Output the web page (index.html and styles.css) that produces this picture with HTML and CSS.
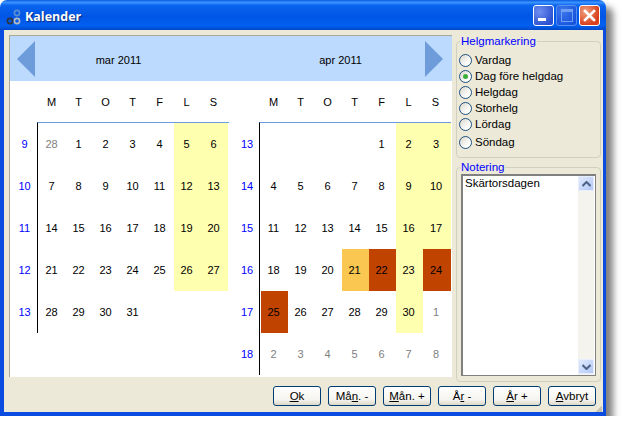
FILE: index.html
```html
<!DOCTYPE html>
<html lang="sv">
  <head>
    <meta charset="UTF-8" />
    <title>Kalender</title>
    <link rel="stylesheet" href="styles.css">
  </head>
  <body>
    <div class="window">
      <div class="titlebar">
        <svg class="app-icon" width="16" height="18" viewBox="0 0 16 18">
          <circle cx="11" cy="5" r="2.6" fill="none" stroke="#5b8fd0" stroke-width="1.6" />
          <circle cx="4" cy="13" r="2.6" fill="none" stroke="#30343c" stroke-width="1.6" />
          <circle cx="11" cy="13" r="2.6" fill="none" stroke="#b8bcc0" stroke-width="1.6" />
        </svg>
        <span class="title">Kalender</span>
        <div class="title-buttons">
          <div class="tbtn tbtn-min"><span class="min-bar"></span></div>
          <div class="tbtn tbtn-max"><span class="max-box"></span></div>
          <div class="tbtn tbtn-close">
            <svg width="13" height="13" viewBox="0 0 13 13">
              <path d="M2 2 L11 11 M11 2 L2 11" stroke="#fff" stroke-width="2.6" stroke-linecap="square" />
            </svg>
          </div>
        </div>
      </div>

      <div class="client">
        <div class="main">
          <div class="calendar">
            <div class="cal-head">
              <div class="arrow arrow-prev"></div>
              <div class="month-label label-mar">mar 2011</div>
              <div class="month-label label-apr">apr 2011</div>
              <div class="arrow arrow-next"></div>
            </div>
            <div class="months">
              <div class="month month-mar">
                <div class="dow">
                  <span>M</span><span>T</span><span>O</span><span>T</span><span>F</span><span>L</span><span>S</span>
                </div>
                <div class="month-body">
                  <div class="weeks">
                    <span>9</span><span>10</span><span>11</span><span>12</span><span>13</span>
                  </div>
                  <div class="days">
                    <span class="other">28</span><span>1</span><span>2</span><span>3</span><span>4</span><span class="we">5</span><span class="we">6</span>
                    <span>7</span><span>8</span><span>9</span><span>10</span><span>11</span><span class="we">12</span><span class="we">13</span>
                    <span>14</span><span>15</span><span>16</span><span>17</span><span>18</span><span class="we">19</span><span class="we">20</span>
                    <span>21</span><span>22</span><span>23</span><span>24</span><span>25</span><span class="we">26</span><span class="we">27</span>
                    <span>28</span><span>29</span><span>30</span><span>31</span>
                  </div>
                </div>
              </div>
              <div class="month month-apr">
                <div class="dow">
                  <span>M</span><span>T</span><span>O</span><span>T</span><span>F</span><span>L</span><span>S</span>
                </div>
                <div class="month-body">
                  <div class="weeks">
                    <span>13</span><span>14</span><span>15</span><span>16</span><span>17</span><span>18</span>
                  </div>
                  <div class="days">
                    <span></span><span></span><span></span><span></span><span>1</span><span class="we">2</span><span class="we">3</span>
                    <span>4</span><span>5</span><span>6</span><span>7</span><span>8</span><span class="we">9</span><span class="we">10</span>
                    <span>11</span><span>12</span><span>13</span><span>14</span><span>15</span><span class="we">16</span><span class="we">17</span>
                    <span>18</span><span>19</span><span>20</span><span class="eve">21</span><span class="hol">22</span><span class="we">23</span><span class="hol">24</span>
                    <span class="hol">25</span><span>26</span><span>27</span><span>28</span><span>29</span><span class="we">30</span><span class="other">1</span>
                    <span class="other">2</span><span class="other">3</span><span class="other">4</span><span class="other">5</span><span class="other">6</span><span class="other">7</span><span class="other">8</span>
                  </div>
                </div>
              </div>
            </div>
          </div>

          <div class="side">
            <fieldset class="group group-mark">
              <legend>Helgmarkering</legend>
              <div class="radio"><i class="dot"></i>Vardag</div>
              <div class="radio"><i class="dot on"></i>Dag före helgdag</div>
              <div class="radio"><i class="dot"></i>Helgdag</div>
              <div class="radio"><i class="dot"></i>Storhelg</div>
              <div class="radio"><i class="dot"></i>Lördag</div>
              <div class="radio radio-last"><i class="dot"></i>Söndag</div>
            </fieldset>
            <fieldset class="group group-note">
              <legend>Notering</legend>
              <div class="notebox">
                <div class="notetext">Skärtorsdagen</div>
                <div class="scrollbar">
                  <div class="sbtn">
                    <svg width="9" height="6" viewBox="0 0 9 6"><path d="M0.5 5 L4.5 1 L8.5 5" fill="none" stroke="#4d6185" stroke-width="2" /></svg>
                  </div>
                  <div class="sbtn">
                    <svg width="9" height="6" viewBox="0 0 9 6"><path d="M0.5 1 L4.5 5 L8.5 1" fill="none" stroke="#4d6185" stroke-width="2" /></svg>
                  </div>
                </div>
              </div>
            </fieldset>
          </div>
        </div>

        <div class="buttons">
          <button><u>O</u>k</button>
          <button>Må<u>n</u>. -</button>
          <button><u>M</u>ån. +</button>
          <button>Å<u>r</u> -</button>
          <button><u>Å</u>r +</button>
          <button><u>A</u>vbryt</button>
        </div>
        <div class="grip"></div>
      </div>
    </div>
  </body>
</html>
```

FILE: styles.css
```css
body {
  margin: 0;
  background-color: #fff;
  font-family: "Liberation Sans", Arial, sans-serif;
  font-size: 11px;
  color: #000;
}

.window {
  width: 606px;
  height: 416px;
  display: flex;
  flex-direction: column;
  border-radius: 7px 7px 0 0;
  box-shadow: 7px 7px 7px rgba(0, 0, 0, 0.5);
}

/* title bar */
.titlebar {
  height: 30px;
  flex: none;
  display: flex;
  align-items: center;
  padding: 2px 6px 0;
  box-sizing: border-box;
  border-radius: 7px 7px 0 0;
  background: linear-gradient(180deg, #0a5be0 0%, #3a93ff 8%, #0a64ee 18%, #0055e5 55%, #0260f0 85%, #0048c8 100%);
}

.app-icon {
  margin-top: 1px;
}

.title {
  margin-left: 3px;
  font-family: "Open Sans", Arial, sans-serif;
  font-size: 12.5px;
  font-weight: 700;
  color: #fff;
  text-shadow: 1px 1px 1px #0a2a80;
}

.title-buttons {
  margin-left: auto;
  margin-top: -2px;
  display: flex;
  gap: 2px;
}

.tbtn {
  width: 19px;
  height: 19px;
  border: 1px solid #fff;
  border-radius: 3px;
  display: flex;
  align-items: center;
  justify-content: center;
  background: radial-gradient(circle at 30% 30%, #6d8ff0, #2a4fd0 80%);
}

.tbtn-max {
  opacity: 0.55;
  border-color: #9bb8f5;
}

.tbtn-close {
  background: radial-gradient(circle at 30% 30%, #f0a080, #d8401c 70%);
}

.min-bar {
  width: 8px;
  height: 3px;
  background: #fff;
  margin-top: 8px;
  margin-right: 3px;
}

.max-box {
  width: 10px;
  height: 9px;
  border: 1px solid #c8d8ff;
  border-top-width: 3px;
}

/* client area */
.client {
  flex: 1;
  position: relative;
  background-color: #ece9d8;
  border: solid #0a4be0;
  border-width: 0 3px 4px 4px;
  padding: 5px 0 0 5px;
  min-height: 0;
}

.main {
  display: flex;
  align-items: flex-start;
}

.calendar {
  width: 442px;
  height: 341px;
  border-left: 1px solid #aca899;
  border-top: 1px solid #aca899;
  background-color: #fff;
  flex: none;
}

.cal-head {
  position: relative;
  height: 45px;
  display: flex;
  align-items: center;
  background-color: #bcd9fe;
}

.month-label {
  padding-top: 3px;
  text-align: center;
}

.label-mar {
  width: 217px;
}

.label-apr {
  width: 225px;
  padding-left: 2px;
  box-sizing: border-box;
}

.arrow {
  position: absolute;
  top: 5px;
  width: 0;
  height: 0;
  border-top: 18px solid transparent;
  border-bottom: 18px solid transparent;
}

.arrow-prev {
  left: 7px;
  border-right: 18px solid #6e9bd9;
}

.arrow-next {
  right: 9px;
  border-left: 18px solid #6e9bd9;
}

.months {
  display: flex;
}

.month-mar {
  width: 219px;
}

.month-apr {
  width: 222px;
}

.dow {
  height: 41px;
  display: grid;
  grid-template-columns: repeat(7, 27px);
  align-items: center;
  text-align: center;
}

.month-mar .dow {
  padding-left: 28px;
}

.month-apr .dow {
  padding-left: 31px;
}

.month-body {
  display: flex;
}

.weeks {
  flex: none;
  display: grid;
  grid-auto-rows: 42px;
  padding-top: 1px;
  align-items: center;
  text-align: center;
  color: #0000ff;
  box-sizing: border-box;
}

.month-mar .weeks {
  width: 27px;
  padding-left: 2px;
}

.month-apr .weeks {
  width: 30px;
  padding-left: 6px;
}

.days {
  display: grid;
  grid-template-columns: repeat(7, 27px);
  grid-auto-rows: 42px;
  padding: 0 1px 0 1px;
  border-left: 1px solid #000;
  border-top: 1px solid #6a9be0;
}

.days span {
  display: flex;
  align-items: center;
  justify-content: center;
  padding-right: 2px;
}

.month-apr .days span:nth-child(7n) {
  width: 28px;
  box-sizing: border-box;
}

.other {
  color: #808080;
}

.we {
  background-color: #ffffb0;
}

.eve {
  background-color: #fac850;
}

.hol {
  background-color: #c04400;
}

/* right side */
.side {
  margin-left: 4px;
  width: 145px;
  flex: none;
  display: flex;
  flex-direction: column;
  gap: 3px;
  font-size: 11.5px;
}

.group {
  margin: 0;
  padding: 0 4px;
  border: 1px solid #d0d0bf;
  border-radius: 4px;
  box-sizing: border-box;
}

.group legend {
  margin-left: -1px;
  padding: 0 1px;
  color: #0000ff;
  font-size: 11.5px;
  line-height: 13px;
}

.group-mark {
  height: 123px;
}

.group-note {
  height: 221px;
}

.radio {
  height: 16px;
  display: flex;
  align-items: center;
  gap: 3px;
  margin-left: -2px;
}

.radio:first-of-type {
  margin-top: 4px;
}

.radio-last {
  margin-top: 2px;
}

.dot {
  width: 11px;
  height: 11px;
  flex: none;
  border: 1px solid #1c5180;
  border-radius: 50%;
  background: linear-gradient(135deg, #dcd8cc, #fff 75%);
  position: relative;
}

.dot.on::after {
  content: "";
  position: absolute;
  left: 3px;
  top: 3px;
  width: 5px;
  height: 5px;
  border-radius: 50%;
  background: #3cae3c;
}

.notebox {
  height: 202px;
  display: flex;
  background-color: #fff;
  border: 1px solid #808080;
  border-top-width: 2px;
  border-left-width: 2px;
  box-sizing: border-box;
  padding-right: 1px;
}

.notetext {
  flex: 1;
  padding: 1px 2px;
}

.scrollbar {
  width: 16px;
  display: flex;
  flex-direction: column;
  justify-content: space-between;
  background-color: #f4f3ee;
  padding: 0 0 1px;
}

.sbtn {
  height: 15px;
  display: flex;
  align-items: center;
  justify-content: center;
  background: linear-gradient(135deg, #e1eafe, #b3c8f6);
  border: 1px solid #e8eefc;
  box-sizing: border-box;
}

/* bottom buttons */
.buttons {
  position: absolute;
  right: 7px;
  top: 356px;
  display: flex;
  gap: 7px;
}

button {
  width: 48px;
  height: 20px;
  padding: 0;
  font: inherit;
  font-size: 11.5px;
  color: #000;
  border: 1px solid #003c74;
  border-radius: 3px;
  background: linear-gradient(180deg, #fff 0%, #f5f4ee 70%, #dcd8c8 100%);
}

.grip {
  position: absolute;
  right: 1px;
  bottom: 0;
  width: 6px;
  height: 6px;
  background: linear-gradient(135deg, transparent 50%, #c6c3b2 50%);
}
```
